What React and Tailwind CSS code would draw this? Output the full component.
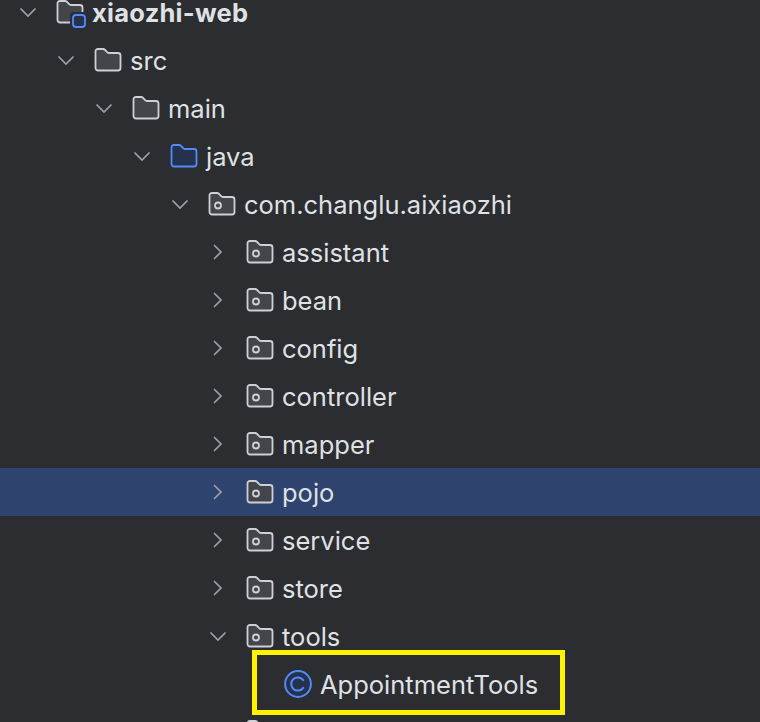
import React from 'react';

const rows = [
  { name: 'xiaozhi-web', depth: 0, open: true, icon: 'module', bold: true },
  { name: 'src', depth: 1, open: true, icon: 'folder' },
  { name: 'main', depth: 2, open: true, icon: 'folder' },
  { name: 'java', depth: 3, open: true, icon: 'source' },
  { name: 'com.changlu.aixiaozhi', depth: 4, open: true, icon: 'package' },
  { name: 'assistant', depth: 5, icon: 'package' },
  { name: 'bean', depth: 5, icon: 'package' },
  { name: 'config', depth: 5, icon: 'package' },
  { name: 'controller', depth: 5, icon: 'package' },
  { name: 'mapper', depth: 5, icon: 'package' },
  { name: 'pojo', depth: 5, icon: 'package', selected: true },
  { name: 'service', depth: 5, icon: 'package' },
  { name: 'store', depth: 5, icon: 'package' },
  { name: 'tools', depth: 5, open: true, icon: 'package' },
  { name: 'AppointmentTools', depth: 6, icon: 'class', leaf: true },
  // next row is only just visible at the bottom edge, no label readable
  { name: '', depth: 5, icon: 'package' },
];

const indent = {
  0: 'pl-[12px]',
  1: 'pl-[50px]',
  2: 'pl-[88px]',
  3: 'pl-[126px]',
  4: 'pl-[164px]',
  5: 'pl-[202px]',
  6: 'pl-[240px]',
};

const FOLDER_PATH =
  'M1.5 20V3.5A2.5 2.5 0 0 1 4 1h5.2c.7 0 1.3.3 1.8.8l2.2 2.4c.4.5 1 .8 1.7.8H24a2.5 2.5 0 0 1 2.5 2.5V20a2.5 2.5 0 0 1-2.5 2.5H4A2.5 2.5 0 0 1 1.5 20Z';

const Chevron = ({ open }) => (
  <svg width="32" height="24" viewBox="0 0 32 24" fill="none" stroke="#9da0a8" strokeWidth="1.7">
    {open ? <path d="M8.5 8.5 16 16l7.5-7.5" /> : <path d="M12 5l7 7-7 7" />}
  </svg>
);

const TreeIcon = ({ type }) => {
  if (type === 'class') {
    return (
      <svg width="28" height="28" viewBox="0 0 28 28" fill="none" stroke="#548af7" strokeWidth="2">
        <circle cx="14" cy="14" r="12.9" fill="#25324d" />
        <path d="M19.2 10.2a6.6 6.6 0 1 0 0 7.6" strokeLinecap="round" />
      </svg>
    );
  }
  const blue = type === 'source';
  return (
    <svg width="28" height="24" viewBox="0 0 28 24" fill="none" className="overflow-visible">
      <path
        d={FOLDER_PATH}
        fill={blue ? '#25324d' : '#43454a'}
        stroke={blue ? '#548af7' : '#ced0d6'}
        strokeWidth="1.8"
      />
      {type === 'package' && <circle cx="10" cy="13.5" r="3" stroke="#ced0d6" strokeWidth="1.8" />}
      {type === 'module' && (
        <>
          <rect x="14" y="12" width="18" height="18" rx="4" fill="#2b2d30" />
          <rect x="17" y="15" width="12" height="12" rx="3" fill="#25324d" stroke="#548af7" strokeWidth="1.8" />
        </>
      )}
    </svg>
  );
};

const TreeRow = ({ row }) => (
  <div
    className={`flex h-12 shrink-0 items-center ${indent[row.depth]} ${row.selected ? 'bg-[#2e436e]' : ''}`}
  >
    <div className="mr-3 flex h-6 w-8 shrink-0 items-center justify-center">
      {!row.leaf && <Chevron open={row.open} />}
    </div>
    <div className="flex w-7 shrink-0 items-center justify-center">
      <TreeIcon type={row.icon} />
    </div>
    {row.name && (
      <span className={`ml-2 whitespace-nowrap pt-[2px] text-[25.5px] leading-none ${row.bold ? 'font-bold tracking-[0.25px]' : ''}`}>
        {row.name}
      </span>
    )}
  </div>
);

export default function App() {
  return (
    <div className="relative h-[722px] w-[760px] overflow-hidden bg-[#2b2d30] font-['Inter','Liberation_Sans',sans-serif] text-[#dfe1e5]">
      <div className="-mt-3 flex flex-col">
        {rows.map((row) => (
          <TreeRow key={row.name || 'next'} row={row} />
        ))}
      </div>
      {/* Yellow annotation drawn over the tree */}
      <div className="absolute left-[252px] top-[650px] h-[65px] w-[313px] border-[5px] border-[#fff200]" />
    </div>
  );
}
